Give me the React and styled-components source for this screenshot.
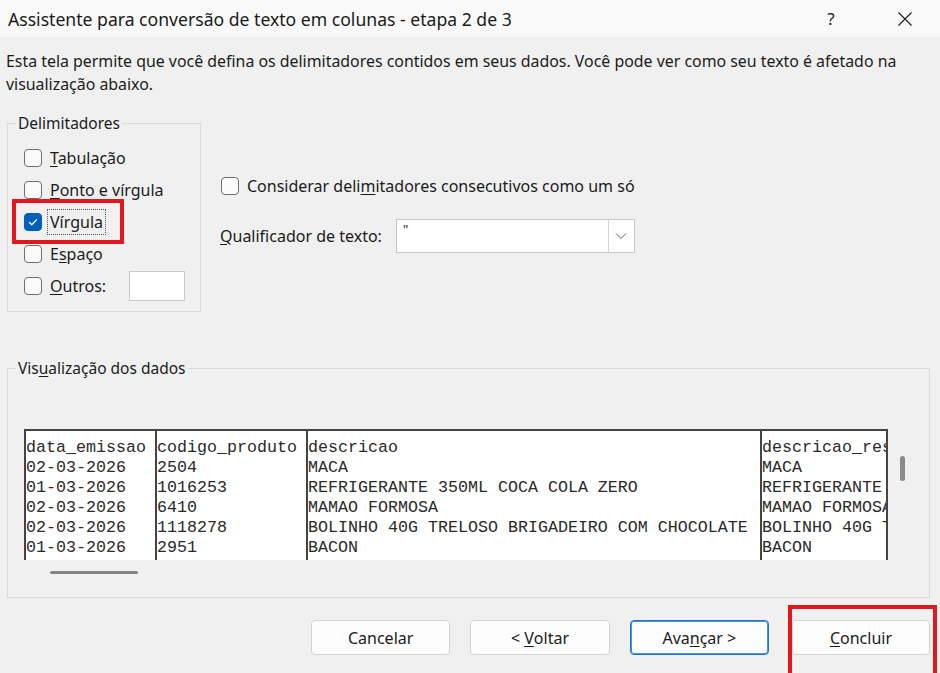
import { createGlobalStyle, styled } from 'styled-components';

const GlobalStyle = createGlobalStyle`
  html, body {
    margin: 0;
    padding: 0;
    background: #f0f0f0;
  }
  body {
    font-family: "Noto Sans", "Liberation Sans", sans-serif;
    color: #1b1b1b;
  }
`;

const Dialog = styled.div`
  position: relative;
  width: 940px;
  height: 673px;
  overflow: hidden;
  background: #f0f0f0;
  display: flex;
  flex-direction: column;
`;

const TitleBar = styled.div`
  height: 37px;
  flex: none;
  background: #f9f9f9;
  display: flex;
  align-items: center;
  padding: 0 12px 0 8px;
  gap: 28px;
`;

const TitleText = styled.div`
  flex: 1;
  font-size: 17.6px;
  color: #1a1a1a;
`;

const TitleButton = styled.div`
  width: 46px;
  height: 37px;
  display: flex;
  align-items: center;
  justify-content: center;
  font-size: 17px;
  color: #1a1a1a;
`;

const Content = styled.div`
  flex: 1;
  display: flex;
  flex-direction: column;
  padding: 0 10px 0 7px;
`;

const Description = styled.p`
  margin: 13px 0 0 -1px;
  font-size: 15.9px;
  line-height: 23px;
`;

const OptionsRow = styled.div`
  display: flex;
  gap: 19px;
  margin-top: 17px;
`;

const Group = styled.fieldset`
  margin: 0;
  min-width: 0;
  width: ${(p) => p.$width}px;
  height: ${(p) => p.$height}px;
  box-sizing: border-box;
  border: 1px solid #dadada;
  padding: 0 0 0 16px;
`;

const Legend = styled.legend`
  margin-left: -8px;
  padding: 0 2px;
  font-size: 15.5px;
  line-height: 20px;
  color: #1b1b1b;
`;

const CheckList = styled.div`
  display: flex;
  flex-direction: column;
  padding-top: 9px;
`;

const CheckRow = styled.div`
  position: relative;
  height: 32px;
  display: flex;
  align-items: center;
  gap: 7px;
  font-size: 16px;
`;

const Box = styled.span`
  width: 18px;
  height: 18px;
  flex: none;
  box-sizing: border-box;
  border-radius: 4px;
  border: 1px solid ${(p) => (p.$checked ? '#005fb8' : '#6f6f6f')};
  background: ${(p) => (p.$checked ? '#005fb8' : '#fbfbfb')};
  display: flex;
  align-items: center;
  justify-content: center;
`;

const Label = styled.span`
  padding: 1px 2px;
  margin-left: -2px;
  border: 1px dotted ${(p) => (p.$focus ? '#555' : 'transparent')};
`;

const Key = styled.span`
  text-decoration: underline;
  text-underline-offset: 2px;
`;

const Highlight = styled.div`
  position: absolute;
  left: ${(p) => p.$left}px;
  top: ${(p) => p.$top}px;
  width: ${(p) => p.$w}px;
  height: ${(p) => p.$h}px;
  box-sizing: border-box;
  border: 4px solid #e3161b;
  pointer-events: none;
`;

const SmallInput = styled.span`
  width: 56px;
  height: 30px;
  box-sizing: border-box;
  margin-left: 13px;
  background: #fff;
  border: 1px solid #c9c9c9;
`;

const RightColumn = styled.div`
  display: flex;
  flex-direction: column;
  padding-top: 63px;
`;

const ConsecRow = styled.div`
  display: flex;
  align-items: center;
  gap: 8px;
  font-size: 16px;
  height: 20px;
  padding-left: 1px;
`;

const QualRow = styled.div`
  display: flex;
  align-items: center;
  gap: 14px;
  margin-top: 23px;
  font-size: 16px;
`;

const Select = styled.div`
  width: 239px;
  height: 34px;
  box-sizing: border-box;
  background: #fff;
  border: 1px solid #c6c6c6;
  display: flex;
  align-items: stretch;
`;

const SelectValue = styled.div`
  flex: 1;
  padding: 2px 0 0 6px;
  font-size: 13px;
  line-height: 14px;
`;

const SelectArrow = styled.div`
  width: 25px;
  border-left: 1px solid #d6d6d6;
  display: flex;
  align-items: center;
  justify-content: center;
`;

const PreviewArea = styled.div`
  display: flex;
  flex-direction: column;
  padding-top: 46px;
`;

const Scroller = styled.div`
  display: flex;
  align-items: flex-start;
  gap: 12px;
  margin-top: 51px;
`;

const Sheet = styled.div`
  width: 864px;
  height: 131px;
  box-sizing: border-box;
  background: #fff;
  border-top: 2px solid #444;
  display: flex;
  overflow: hidden;
`;

const Column = styled.div`
  width: ${(p) => p.$w}px;
  flex: none;
  box-sizing: border-box;
  border-left: 2px solid #444;
  border-right: ${(p) => (p.$last ? '2px solid #444' : 'none')};
  padding: 7px 0 0 0;
  font-family: "Liberation Mono", "Courier New", monospace;
  font-size: 16.67px;
  line-height: 20px;
  color: #2a2a2a;
  white-space: pre;
  overflow: hidden;
`;

const VTrack = styled.div`
  padding-top: 27px;
`;

const VThumb = styled.div`
  width: 5px;
  height: 25px;
  border-radius: 3px;
  background: #8a8a8a;
`;

const HThumb = styled.div`
  width: 88px;
  height: 3px;
  margin: 11px 0 0 26px;
  border-radius: 2px;
  background: #858585;
`;

const ButtonRow = styled.div`
  display: flex;
  gap: 20px;
  margin-top: 22px;
  padding-left: 304px;
`;

const ButtonWrap = styled.div`
  position: relative;
  margin-left: ${(p) => p.$offset || 0}px;
`;

const Button = styled.div`
  width: ${(p) => p.$w || 140}px;
  height: 35px;
  box-sizing: border-box;
  border-radius: 4px;
  background: #fdfdfd;
  border: 1px solid ${(p) => (p.$primary ? '#1f74cf' : '#d3d3d3')};
  box-shadow: ${(p) => (p.$primary ? 'inset 0 0 0 1px #4b91df' : 'none')};
  display: flex;
  align-items: center;
  justify-content: center;
  font-size: 16px;
  color: #1b1b1b;
  white-space: pre;
`;

const columns = [
  {
    w: 131,
    lines: ['data_emissao', '02-03-2026', '01-03-2026', '02-03-2026', '02-03-2026', '01-03-2026'],
  },
  {
    w: 151,
    lines: ['codigo_produto', '2504', '1016253', '6410', '1118278', '2951'],
  },
  {
    w: 454,
    lines: [
      'descricao',
      'MACA',
      'REFRIGERANTE 350ML COCA COLA ZERO',
      'MAMAO FORMOSA',
      'BOLINHO 40G TRELOSO BRIGADEIRO COM CHOCOLATE',
      'BACON',
    ],
  },
  {
    w: 128,
    last: true,
    lines: ['descricao_res', 'MACA', 'REFRIGERANTE', 'MAMAO FORMOSA', 'BOLINHO 40G T', 'BACON'],
  },
];

function CheckMark() {
  return (
    <svg width="12" height="12" viewBox="0 0 12 12">
      <path d="M2.2 6.3 L4.8 8.8 L9.8 3.4" fill="none" stroke="#fff" strokeWidth="1.3" />
    </svg>
  );
}

function Checkbox({ checked }) {
  return <Box $checked={checked}>{checked && <CheckMark />}</Box>;
}

function CloseIcon() {
  return (
    <svg width="16" height="16" viewBox="0 0 16 16">
      <path d="M1.5 1.5 L14.5 14.5 M14.5 1.5 L1.5 14.5" stroke="#1a1a1a" strokeWidth="1.1" fill="none" />
    </svg>
  );
}

function Chevron() {
  return (
    <svg width="12" height="8" viewBox="0 0 12 8">
      <path d="M1 1.5 L6 6.5 L11 1.5" stroke="#606060" strokeWidth="1" fill="none" />
    </svg>
  );
}

export default function App() {
  return (
    <>
      <GlobalStyle />
      <Dialog>
        <TitleBar>
          <TitleText>Assistente para conversão de texto em colunas - etapa 2 de 3</TitleText>
          <TitleButton>?</TitleButton>
          <TitleButton>
            <CloseIcon />
          </TitleButton>
        </TitleBar>
        <Content>
          <Description>
            Esta tela permite que você defina os delimitadores contidos em seus dados. Você pode ver como seu texto é afetado na
            <br />
            visualização abaixo.
          </Description>

          <OptionsRow>
            <Group $width={194} $height={199}>
              <Legend>Delimitadores</Legend>
              <CheckList>
                <CheckRow>
                  <Checkbox />
                  <Label>
                    <Key>T</Key>abulação
                  </Label>
                </CheckRow>
                <CheckRow>
                  <Checkbox />
                  <Label>
                    <Key>P</Key>onto e vírgula
                  </Label>
                </CheckRow>
                <CheckRow>
                  <Checkbox checked />
                  <Label $focus>
                    Vír<Key>g</Key>ula
                  </Label>
                  <Highlight $left={-12} $top={-7} $w={112} $h={45} />
                </CheckRow>
                <CheckRow>
                  <Checkbox />
                  <Label>
                    E<Key>s</Key>paço
                  </Label>
                </CheckRow>
                <CheckRow>
                  <Checkbox />
                  <Label>
                    <Key>O</Key>utros:
                  </Label>
                  <SmallInput />
                </CheckRow>
              </CheckList>
            </Group>

            <RightColumn>
              <ConsecRow>
                <Checkbox />
                <span>
                  Considerar deli<Key>m</Key>itadores consecutivos como um só
                </span>
              </ConsecRow>
              <QualRow>
                <span>
                  <Key>Q</Key>ualificador de texto:
                </span>
                <Select>
                  <SelectValue>"</SelectValue>
                  <SelectArrow>
                    <Chevron />
                  </SelectArrow>
                </Select>
              </QualRow>
            </RightColumn>
          </OptionsRow>

          <PreviewArea>
            <Group $width={923} $height={240}>
              <Legend>
                Vis<Key>u</Key>alização dos dados
              </Legend>
              <Scroller>
                <Sheet>
                  {columns.map((col, i) => (
                    <Column key={i} $w={col.w} $last={col.last}>
                      {col.lines.join('\n')}
                    </Column>
                  ))}
                </Sheet>
                <VTrack>
                  <VThumb />
                </VTrack>
              </Scroller>
              <HThumb />
            </Group>
          </PreviewArea>

          <ButtonRow>
            <Button>Cancelar</Button>
            <Button>
              {'< '}
              <Key>V</Key>oltar
            </Button>
            <Button $primary>
              Ava<Key>n</Key>çar{' >'}
            </Button>
            <ButtonWrap $offset={3}>
              <Button $w={138}>
                <Key>C</Key>oncluir
              </Button>
              <Highlight $left={-4} $top={-15} $w={149} $h={80} />
            </ButtonWrap>
          </ButtonRow>
        </Content>
      </Dialog>
    </>
  );
}
